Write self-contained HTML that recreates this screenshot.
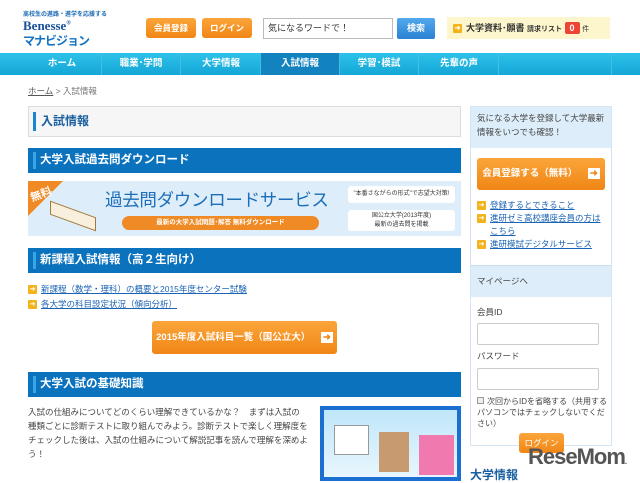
<!DOCTYPE html>
<html><head><meta charset="utf-8"><style>
*{margin:0;padding:0;box-sizing:border-box}
body{width:640px;height:481px;overflow:hidden;background:#fff;font-family:"Liberation Sans","Noto Sans CJK JP",sans-serif;color:#333;position:relative;font-size:9px}
.a{position:absolute}
.btn{background:linear-gradient(#fba53a,#f08616);color:#fff;border-radius:3px;font-weight:bold;text-align:center}
.bh{position:absolute;left:28px;width:433px;height:25px;background:#0b72bd;color:#fff;font-weight:bold;font-size:11.5px;line-height:25px;padding-left:12px}
.bh:before{content:"";position:absolute;left:5px;top:4px;width:3px;height:17px;background:#39a4e6}
.ar{display:inline-block;width:9px;height:9px;background:#f2b31c;color:#fff;font-size:7px;line-height:9px;text-align:center;border-radius:1px;vertical-align:middle;margin-right:4px}
.lk{color:#1a63b5;text-decoration:underline}
.nav div{position:absolute;top:0;width:79px;height:22px;line-height:22px;text-align:center;color:#fff;font-weight:bold;font-size:9.5px;border-right:1px solid #46bde0}
</style></head><body>
<div class="a" style="left:23px;top:9px;font-size:6px;color:#1c6bb5;font-weight:bold">高校生の進路・進学を応援する</div>
<div class="a" style="left:23px;top:18px;font-size:13px;color:#1a4f9c;font-family:'Liberation Serif',serif;font-weight:bold">Benesse<sup style="font-size:6px">®</sup></div>
<div class="a" style="left:23px;top:32px;font-size:12px;color:#1573c4;font-weight:bold;letter-spacing:-1px">マナビジョン</div>
<div class="a btn" style="left:146px;top:18px;width:50px;height:20px;line-height:20px;font-size:8.5px">会員登録</div>
<div class="a btn" style="left:202px;top:18px;width:50px;height:20px;line-height:20px;font-size:8.5px">ログイン</div>
<div class="a" style="left:263px;top:18px;width:130px;height:21px;border:1px solid #bbb;font-size:9px;line-height:19px;padding-left:4px">気になるワードで！</div>
<div class="a" style="left:397px;top:18px;width:38px;height:21px;background:linear-gradient(#52a9ec,#2a82d2);color:#fff;border-radius:2px;text-align:center;line-height:21px;font-size:9px;font-weight:bold">検索</div>
<div class="a" style="left:447px;top:17px;width:163px;height:22px;background:#fdf6cc;font-size:9px;line-height:22px;padding-left:6px;font-weight:bold"><span class="ar">➜</span>大学資料･願書 <span style="font-size:7px">請求リスト</span> <span style="background:#e43;color:#fff;padding:1px 5px;border-radius:2px">0</span> <span style="font-size:7px;font-weight:normal">件</span></div>
<div class="a nav" style="left:0;top:53px;width:640px;height:22px;background:linear-gradient(#2ec2e9,#14a6d6)">
<div style="left:23px">ホーム</div><div style="left:102px">職業･学問</div><div style="left:182px">大学情報</div><div style="left:261px;background:#1383c0">入試情報</div><div style="left:340px">学習･模試</div><div style="left:420px">先輩の声</div><div style="left:499px;width:113px"></div></div>
<div class="a" style="left:28px;top:85px;font-size:8.5px;color:#777"><span class="lk" style="color:#555">ホーム</span> &gt; 入試情報</div>
<div class="a" style="left:28px;top:106px;width:433px;height:31px;background:#f6f6f6;border:1px solid #ddd;font-size:12px;font-weight:bold;color:#1a5fa0;line-height:29px;padding-left:12px"><span class="a" style="left:4px;top:5px;width:3px;height:19px;background:#1a85d0"></span>入試情報</div>
<div class="bh" style="top:148px">大学入試過去問ダウンロード</div>
<div class="a" style="left:28px;top:181px;width:433px;height:55px;background:#ddeefa">
<div class="a" style="left:0;top:0;width:0;height:0;border-top:35px solid #f08a24;border-right:35px solid transparent"></div>
<div class="a" style="left:2px;top:5px;color:#fff;font-weight:bold;font-size:11px;transform:rotate(-20deg)">無料</div>
<div class="a" style="left:22px;top:28px;width:46px;height:14px;background:#f8f0dc;border:1px solid #a0783c;transform:skewY(20deg)"></div>
<div class="a" style="left:77px;top:6px;font-size:17.5px;color:#1d6db8;letter-spacing:-0.3px">過去問ダウンロードサービス</div>
<div class="a" style="left:94px;top:35px;width:197px;height:14px;border-radius:7px;background:#f08a24;color:#fff;font-size:6.5px;font-weight:bold;text-align:center;line-height:14px">最新の大学入試問題･解答 無料ダウンロード</div>
<div class="a" style="left:320px;top:5px;width:107px;height:17px;background:#fff;border-radius:3px;font-size:6px;line-height:17px;text-align:center">"本番さながらの形式"で志望大対策!</div>
<div class="a" style="left:320px;top:29px;width:107px;height:21px;background:#fff;border-radius:3px;font-size:6px;line-height:9px;text-align:center;padding-top:2px">国公立大学(2013年度)<br>最新の過去問を掲載</div>
</div>
<div class="bh" style="top:248px">新課程入試情報（高２生向け）</div>
<div class="a" style="left:28px;top:282px;font-size:8.5px;line-height:15px"><span class="ar">➜</span><span class="lk">新課程（数学・理科）の概要と2015年度センター試験</span><br><span class="ar">➜</span><span class="lk">各大学の科目設定状況（傾向分析）</span></div>
<div class="a btn" style="left:152px;top:321px;width:185px;height:33px;line-height:33px;font-size:9.5px">2015年度入試科目一覧（国公立大） <span style="background:#fff;color:#f08616;padding:0 2px;margin-left:8px">➜</span></div>
<div class="bh" style="top:372px">大学入試の基礎知識</div>
<div class="a" style="left:28px;top:405px;width:280px;font-size:8.5px;line-height:14px;color:#444">入試の仕組みについてどのくらい理解できているかな？　まずは入試の種類ごとに診断テストに取り組んでみよう。診断テストで楽しく理解度をチェックした後は、入試の仕組みについて解説記事を読んで理解を深めよう！</div>
<div class="a" style="left:320px;top:406px;width:141px;height:75px;background:#1a6fd0;padding:4px"><div style="width:100%;height:100%;background:linear-gradient(#bfe6fa,#e8f6fd);position:relative"><div class="a" style="left:55px;top:22px;width:30px;height:40px;background:#c89a70"></div><div class="a" style="left:95px;top:25px;width:35px;height:40px;background:#f07ab0"></div><div class="a" style="left:10px;top:15px;width:35px;height:30px;background:#fff;border:1px solid #999"></div></div></div>
<div class="a" style="left:470px;top:106px;width:142px;height:340px;border:1px solid #d4e4f0"></div>
<div class="a" style="left:471px;top:107px;width:140px;height:41px;background:#ddeefa;font-size:8.5px;line-height:14px;padding:4px 6px;color:#444">気になる大学を登録して大学最新情報をいつでも確認！</div>
<div class="a btn" style="left:477px;top:158px;width:128px;height:32px;line-height:32px;font-size:9.5px">会員登録する（無料） <span style="background:#fff;color:#f08616;padding:0 2px;margin-left:8px">➜</span></div>
<div class="a" style="left:477px;top:199px;font-size:8.5px;line-height:13px;width:134px"><span class="ar">➜</span><span class="lk">登録するとできること</span><br><span class="ar">➜</span><span class="lk">進研ゼミ高校講座会員の方は</span><br><span style="margin-left:13px" class="lk">こちら</span><br><span class="ar">➜</span><span class="lk">進研模試デジタルサービス</span></div>
<div class="a" style="left:471px;top:265px;width:140px;height:32px;background:#ddeefa;border-top:1px solid #c8dcec;font-size:8.5px;line-height:30px;padding-left:6px;color:#444">マイページへ</div>
<div class="a" style="left:477px;top:306px;font-size:8.5px;color:#444">会員ID</div>
<div class="a" style="left:477px;top:323px;width:122px;height:22px;border:1px solid #ccc;border-radius:2px"></div>
<div class="a" style="left:477px;top:350px;font-size:8.5px;color:#444">パスワード</div>
<div class="a" style="left:477px;top:368px;width:122px;height:22px;border:1px solid #ccc;border-radius:2px"></div>
<div class="a" style="left:477px;top:396px;width:130px;font-size:8px;line-height:11px;color:#444"><span style="display:inline-block;width:7px;height:7px;border:1px solid #999;background:#eee;margin-right:3px"></span>次回からIDを省略する（共用するパソコンではチェックしないでください）</div>
<div class="a btn" style="left:519px;top:433px;width:45px;height:20px;line-height:20px;font-size:8.5px;font-weight:normal">ログイン</div>
<div class="a" style="left:470px;top:466px;font-size:12px;font-weight:bold;color:#1a5fa0">大学情報</div>
<div class="a" style="left:528px;top:444px;font-size:22px;font-weight:bold;color:#555;letter-spacing:-1px">ReseMom<span style="font-size:8px">.</span></div>
</body></html>
